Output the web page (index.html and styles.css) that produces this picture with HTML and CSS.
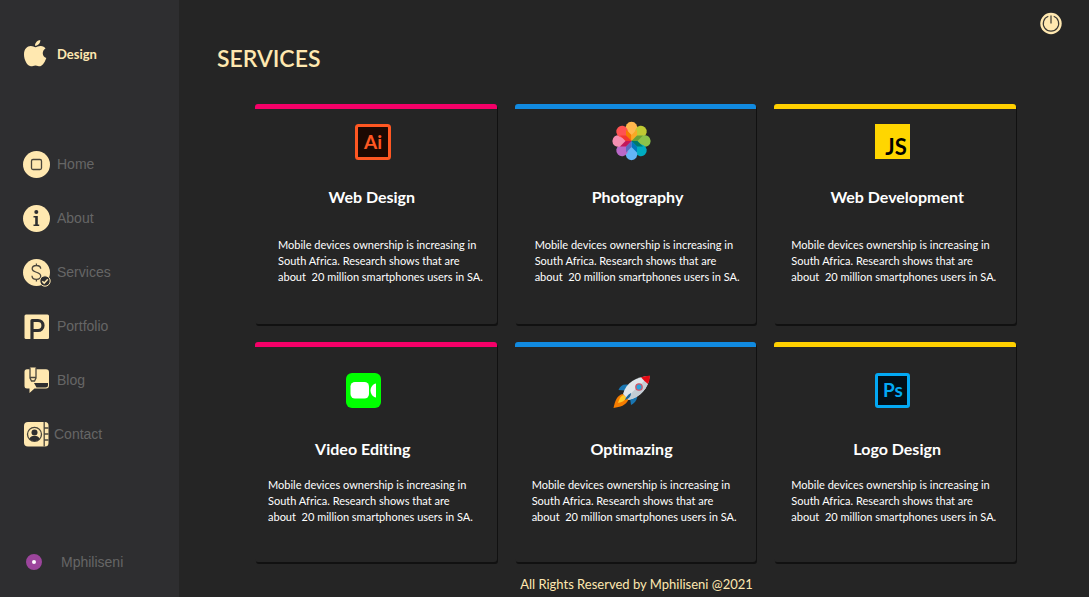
FILE: index.html
```html
<!DOCTYPE html>
<html lang="en">
<head>
<meta charset="utf-8">
<title>Services</title>
<link rel="stylesheet" href="styles.css">
</head>
<body>
<div class="app">
  <aside class="sidebar">
    <a class="brand" href="#">
      <svg class="brand__logo" viewBox="0 0 28 28" aria-hidden="true">
        <path d="M13.500 7.200C14.800 7.200 16.400 6 18.800 6.100c2.200.1 3.800.9 4.700 2.400-3.900 2.600-3.600 7.700.8 9.600-1.100 3.400-3.300 7.500-6 8.200-1.700.3-2.500-.9-4.800-.9-2.300 0-3 1.100-4.700.9C4.900 25.700 2 19.600 2 14.500 2 8.900 5.200 6 8.700 6c2.100 0 3.700 1.200 4.800 1.200z"/>
        <path d="M13 5.800C13 2.700 15.600.1 18.300 0c.3 3.100-2.400 5.900-5.300 5.800z"/>
      </svg>
      <span>Design</span>
    </a>
    <nav class="nav">
      <a class="nav__link" href="#">
        <svg class="nav__icon" viewBox="0 0 28 28" aria-hidden="true">
          <circle class="cream" cx="14.500" cy="14.500" r="13.500"/>
          <rect class="line" x="9.500" y="9.500" width="10" height="10" rx="1.500"/>
        </svg>
        <span>Home</span>
      </a>
      <a class="nav__link" href="#">
        <svg class="nav__icon" viewBox="0 0 28 28" aria-hidden="true">
          <circle class="cream" cx="14.500" cy="14.500" r="13.500"/>
          <circle class="ink" cx="14.300" cy="8" r="2"/>
          <path class="ink" d="M11.500 12h4.300v8.500h1.400v1.500h-5.700v-1.500h1.700v-7h-1.700z"/>
        </svg>
        <span>About</span>
      </a>
      <a class="nav__link" href="#">
        <svg class="nav__icon" viewBox="0 0 28 28" aria-hidden="true">
          <circle class="cream" cx="14.500" cy="14.500" r="13.500"/>
          <path class="line" d="M18.700 10.800c0-2.300-2-3.300-4.300-3.300s-4.200 1-4.200 3.200c0 4.500 8.500 2.600 8.500 7.300 0 2.200-2 3.300-4.300 3.300S10 20.100 10 17.700M14.400 5.500v2M14.400 21.500v2"/>
          <circle class="badge" cx="23" cy="23" r="5.200"/>
          <path class="tick" d="M20.300 23.200l1.900 1.900 3.600-3.900"/>
        </svg>
        <span>Services</span>
      </a>
      <a class="nav__link" href="#">
        <svg class="nav__icon" viewBox="0 0 28 28" aria-hidden="true">
          <rect class="cream" x="2.500" y="2.500" width="24.500" height="24.500" rx="1.500"/>
          <path class="thick" d="M10 27V8.500h6a5 5 0 0 1 0 10H11.500"/>
        </svg>
        <span>Portfolio</span>
      </a>
      <a class="nav__link" href="#">
        <svg class="nav__icon" viewBox="0 0 28 28" aria-hidden="true">
          <path class="cream" d="M5 3.300h19a3 3 0 0 1 3 3V19.500a3 3 0 0 1-3 3H12.500L7.500 27V22.500H5a2.500 2.500 0 0 1-2.500-2.500V5.800A2.500 2.500 0 0 1 5 3.300z"/>
          <path class="ink" d="M12 17H26v2a2.500 2.500 0 0 1-2.500 2.500H14.500z"/>
          <path class="cream" d="M8 1.500h6v11l-2.700 2.700L8 12.500z"/>
          <path class="line" d="M8 1.500v10.500l1.500 3h3L14 12V1.500M8 11.500h6"/>
        </svg>
        <span>Blog</span>
      </a>
      <a class="nav__link" href="#">
        <svg class="nav__icon nav__icon--narrow" viewBox="0 0 25 28" aria-hidden="true">
          <path class="cream" d="M6 2h17a3.500 3.500 0 0 1 3.500 3.500v17.500a3.500 3.500 0 0 1-3.500 3.500H6a4 4 0 0 1-4-4V6a4 4 0 0 1 4-4z"/>
          <path class="line" d="M22.200 2v24.500M22.200 8h4.300M22.200 14h4.300M22.200 20h4.300"/>
          <circle class="line" cx="12.500" cy="14.300" r="7"/>
          <circle class="ink" cx="12.500" cy="12.500" r="3"/>
          <path class="ink" d="M7.500 19c.5-2.500 2.500-3 5-3s4.500.5 5 3c-3 2.800-7 2.800-10 0z"/>
        </svg>
        <span>Contact</span>
      </a>
    </nav>
    <a class="user" href="#">
      <span class="user__dot"></span>
      <span>Mphiliseni</span>
    </a>
  </aside>

  <main class="main">
    <header class="header">
      <h1 class="header__title">SERVICES</h1>
      <button class="power" type="button" aria-label="Log out">
        <svg class="power__icon" viewBox="0 0 22 22" aria-hidden="true">
          <circle class="cream" cx="11" cy="11.500" r="10.700"/>
          <path class="power__line" d="M8.300 4.300a7.700 7.700 0 1 0 5.400 0M11 3.500v8"/>
        </svg>
      </button>
    </header>

    <section class="cards">
      <article class="card card--pink">
        <svg class="card__icon" viewBox="0 0 40 40" aria-hidden="true">
          <rect x="4.500" y="4.500" width="33" height="33" rx="2" fill="#1c0802" stroke="#ff5722" stroke-width="3"/>
          <text class="logo-text" x="21" y="27.500" font-size="19" fill="#ff5722">Ai</text>
        </svg>
        <h2 class="card__title">Web Design</h2>
        <p class="card__text card__text--deep">Mobile devices ownership is increasing in<br>South Africa. Research shows that are<br>about&nbsp; 20 million smartphones users in SA.</p>
      </article>

      <article class="card card--blue">
        <svg class="card__icon" viewBox="0 0 40 40" aria-hidden="true">
          <g>
            <path d="M20.500 20L15 8.500a5.800 5.800 0 1 1 11 0z" fill="#ffb74d"/>
            <path d="M20.500 20L15 8.500a5.800 5.800 0 1 1 11 0z" fill="#c0ca33" transform="rotate(45 20.500 20)"/>
            <path d="M20.500 20L15 8.500a5.800 5.800 0 1 1 11 0z" fill="#8bc34a" transform="rotate(90 20.500 20)"/>
            <path d="M20.500 20L15 8.500a5.800 5.800 0 1 1 11 0z" fill="#00acc1" transform="rotate(135 20.500 20)"/>
            <path d="M20.500 20L15 8.500a5.800 5.800 0 1 1 11 0z" fill="#64b5f6" transform="rotate(180 20.500 20)"/>
            <path d="M20.500 20L15 8.500a5.800 5.800 0 1 1 11 0z" fill="#ba68c8" transform="rotate(225 20.500 20)"/>
            <path d="M20.500 20L15 8.500a5.800 5.800 0 1 1 11 0z" fill="#f48fb1" transform="rotate(270 20.500 20)"/>
            <path d="M20.500 20L15 8.500a5.800 5.800 0 1 1 11 0z" fill="#ff5252" transform="rotate(315 20.500 20)"/>
          </g>
          <path d="M20.500 20V14L15 8.500v6z" fill="#f57c00"/>
          <path d="M20.500 20V14l5.500-5.500v6z" fill="#f9a825"/>
          <path d="M20.500 20l5.500-5.500h6L26.500 20z" fill="#689f38"/>
          <path d="M20.500 20h6l5.500 5.500h-6z" fill="#00796b"/>
          <path d="M20.500 20l5.500 5.500v6L20.500 26z" fill="#0277bd"/>
          <path d="M20.500 20v6L15 31.500v-6z" fill="#5c6bc0"/>
          <path d="M20.500 20L15 25.500H9L14.500 20z" fill="#c2185b"/>
          <path d="M20.500 20h-6L9 14.500h6z" fill="#f4362f"/>
        </svg>
        <h2 class="card__title card__title--inset">Photography</h2>
        <p class="card__text card__text--mid">Mobile devices ownership is increasing in<br>South Africa. Research shows that are<br>about&nbsp; 20 million smartphones users in SA.</p>
      </article>

      <article class="card card--yellow">
        <svg class="card__icon" viewBox="0 0 40 40" aria-hidden="true">
          <rect x="4" y="3" width="35" height="35" fill="#ffd600"/>
          <text class="logo-text" x="25" y="34" font-size="22" fill="#000">JS</text>
        </svg>
        <h2 class="card__title card__title--inset">Web Development</h2>
        <p class="card__text">Mobile devices ownership is increasing in<br>South Africa. Research shows that are<br>about&nbsp; 20 million smartphones users in SA.</p>
      </article>

      <article class="card card--pink card--low card--left">
        <svg class="card__icon" viewBox="0 0 40 40" aria-hidden="true">
          <rect x="3" y="3" width="35" height="35" rx="6" fill="#0f0"/>
          <rect x="7.500" y="12" width="18.500" height="16.500" rx="4.500" fill="#fff"/>
          <path d="M33 13.500v14c-3-.5-5.500-3.500-5.500-7s2.500-6.500 5.500-7z" fill="#fff"/>
        </svg>
        <h2 class="card__title">Video Editing</h2>
        <p class="card__text card__text--near">Mobile devices ownership is increasing in<br>South Africa. Research shows that are<br>about&nbsp; 20 million smartphones users in SA.</p>
      </article>

      <article class="card card--blue card--low">
        <svg class="card__icon" viewBox="0 0 40 40" aria-hidden="true">
          <path d="M18 15c-5-1.500-9 .5-10.500 5l6.500.5zM26 24c1 4-1 8.500-6 11l-1-7z" fill="#1976b2"/>
          <path d="M12 24c-6 1-8 7-9.500 14C9 37 15 35.500 17.500 29.500z" fill="#f57c00"/>
          <path d="M12.500 25c-3 1-4.500 4.500-5.500 8 4-.5 7-2.500 8.500-5.500z" fill="#ffca28"/>
          <path d="M12 24C15 13 25 6.500 38.500 6 38 18 29 27.500 17.500 30z" fill="#dfe5ea"/>
          <path d="M18 29.800C28.500 27.500 38 18 38.500 6L15.500 27.500z" fill="#c4cdd5"/>
          <path d="M30 7.200Q34 6 39 5.500q0 4.500-2 8.500-3.500-2.500-7-6.800z" fill="#e50914"/>
          <circle cx="28" cy="17" r="3.200" fill="#29a3dc" stroke="#d35464" stroke-width="1.300"/>
          <path d="M20 23c-3 1.500-5 4-6 7 3.500-1 6-3.500 6-7z" fill="#15649b"/>
        </svg>
        <h2 class="card__title">Optimazing</h2>
        <p class="card__text">Mobile devices ownership is increasing in<br>South Africa. Research shows that are<br>about&nbsp; 20 million smartphones users in SA.</p>
      </article>

      <article class="card card--yellow card--low">
        <svg class="card__icon" viewBox="0 0 40 40" aria-hidden="true">
          <rect x="5.500" y="4.500" width="32" height="32" rx="1.500" fill="#020f17" stroke="#03a9f4" stroke-width="3"/>
          <text class="logo-text" x="22" y="27" font-size="19" fill="#03a9f4">Ps</text>
        </svg>
        <h2 class="card__title card__title--inset">Logo Design</h2>
        <p class="card__text">Mobile devices ownership is increasing in<br>South Africa. Research shows that are<br>about&nbsp; 20 million smartphones users in SA.</p>
      </article>
    </section>

    <footer class="footer">All Rights Reserved by Mphiliseni @2021</footer>
  </main>
</div>
</body>
</html>
```
FILE: styles.css
```css
* {
  box-sizing: border-box;
}

body {
  margin: 0;
  background: #252525;
  color: #fff;
  font-family: "Trebuchet MS", Lato, sans-serif;
  font-variant-ligatures: none;
}

a {
  color: inherit;
  text-decoration: none;
}

h1, h2, p {
  margin: 0;
}

.app {
  display: flex;
  min-height: 100vh;
}

/* Sidebar */

.sidebar {
  display: flex;
  flex: none;
  flex-direction: column;
  width: 179px;
  padding: 40px 22px 25px;
  background: #2e2e30;
  color: #666;
  font-family: "Liberation Sans", Arial, sans-serif;
  font-size: 14px;
  line-height: 20px;
}

.brand {
  display: flex;
  align-items: center;
  gap: 7px;
  color: #ffe8b0;
  font-family: "Trebuchet MS", Lato, sans-serif;
  font-size: 13px;
  font-weight: 700;
  line-height: 28px;
}

.brand__logo {
  width: 28px;
  height: 28px;
  fill: #ffe8b0;
}

.nav {
  display: flex;
  flex-direction: column;
  gap: 26px;
  margin-top: 82px;
}

.nav__link {
  display: flex;
  align-items: center;
  gap: 7px;
}

.nav__icon {
  width: 28px;
  height: 28px;
  overflow: visible;
}

.nav__icon--narrow {
  width: 25px;
}

.user {
  display: flex;
  align-items: center;
  gap: 19px;
  margin-top: auto;
  padding-left: 4px;
}

.user__dot {
  width: 16px;
  height: 16px;
  border: 6px solid #9c459c;
  border-radius: 50%;
  background: #fff;
}

.cream {
  fill: #ffe8b0;
}

.ink {
  fill: #2e2e30;
}

.line {
  fill: none;
  stroke: #4a463c;
  stroke-width: 1.3;
}

.thick {
  fill: none;
  stroke: #2e2e30;
  stroke-width: 3.2;
  stroke-linejoin: round;
}

.badge {
  fill: #2e2e30;
  stroke: #ffe8b0;
}

.tick {
  fill: none;
  stroke: #ffe8b0;
  stroke-width: 1.5;
}

/* Main column */

.main {
  flex: 1;
  min-width: 0;
  padding: 12px 27px 0 38px;
}

.header {
  display: flex;
  align-items: flex-start;
  justify-content: space-between;
}

.header__title {
  padding-top: 30px;
  font-size: 23px;
  font-weight: 600;
  line-height: 33px;
  color: #ffe8b0;
}

.power {
  padding: 0;
  border: 0;
  background: none;
}

.power__icon {
  display: block;
  width: 22px;
  height: 22px;
  overflow: visible;
}

.power__line {
  fill: none;
  stroke: #3a3833;
  stroke-width: 1.2;
}

/* Service cards */

.cards {
  display: grid;
  grid-template-columns: repeat(3, minmax(0, 1fr));
  gap: 18px;
  padding: 29px 46px 0 38px;
}

.card {
  padding: 12px 8px 39px 0;
  border-top: 5px solid;
  border-radius: 3px;
  box-shadow: 1px 2px #111;
  background: #252525;
}

.card--pink {
  border-color: #f50068;
}

.card--blue {
  border-color: #118ae0;
}

.card--yellow {
  border-color: #ffd000;
}

.card--low {
  padding-top: 23px;
  padding-bottom: 37px;
}

.card--left {
  padding-right: 26px;
}

.card__icon {
  display: block;
  width: 40px;
  height: 40px;
  margin: 0 auto;
}

.logo-text {
  font-family: Lato, sans-serif;
  font-weight: 700;
  text-anchor: middle;
}

.card__title {
  margin-top: 26px;
  color: #fff;
  font-size: 16px;
  font-weight: 700;
  line-height: 20px;
  text-align: center;
}

.card__title--inset {
  padding-left: 12px;
}

.card--low .card__title {
  margin-top: 29px;
}

.card__text {
  margin-top: 30px;
  padding-left: 17px;
  font-size: 11px;
  line-height: 16px;
  white-space: nowrap;
}

.card__text--deep {
  padding-left: 23px;
}

.card__text--mid {
  padding-left: 20px;
}

.card__text--near {
  padding-left: 13px;
}

.card--low .card__text {
  margin-top: 18px;
}

.footer {
  padding: 12px 44px 0 38px;
  color: #ffe8b0;
  font-size: 13px;
  line-height: 20px;
  text-align: center;
}
```
